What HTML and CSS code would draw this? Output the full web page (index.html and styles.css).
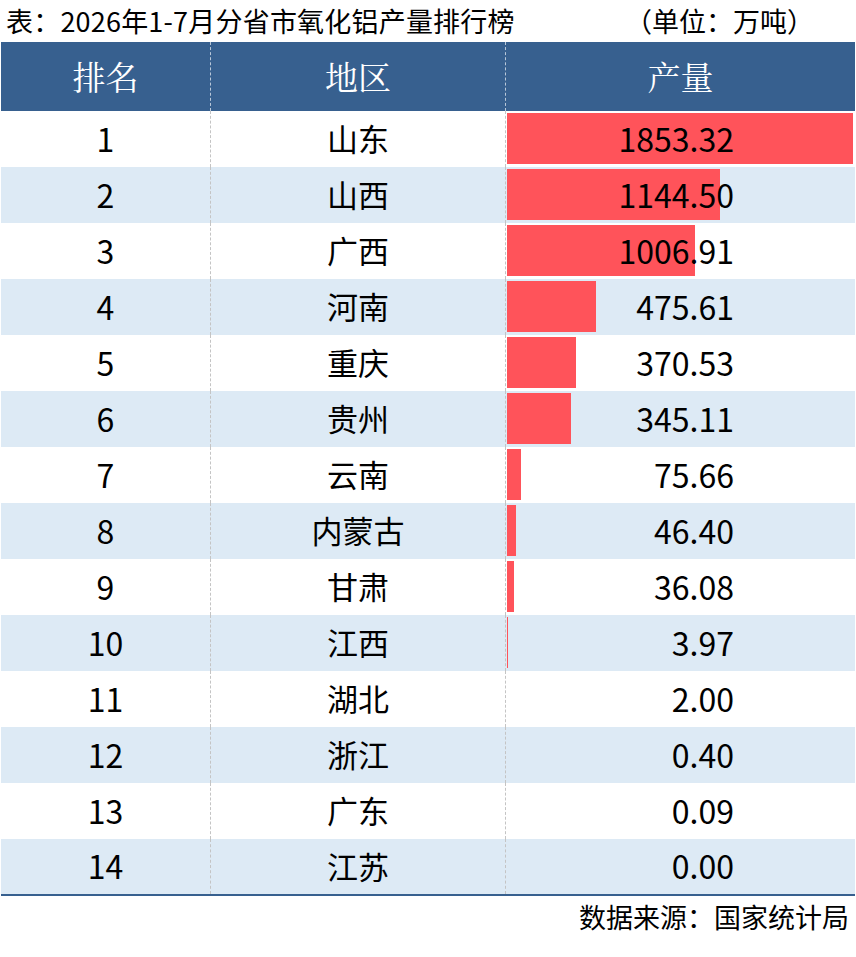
FILE: index.html
```html
<!DOCTYPE html>
<html lang="zh">
<head>
<meta charset="utf-8">
<link rel="stylesheet" href="styles.css">
</head>
<body>
<div class="page">
  <div class="title">
    <span class="title-main">表：2026年1-7月分省市氧化铝产量排行榜</span>
    <span class="unit">（单位：万吨）</span>
  </div>
  <div class="table">
    <div class="row head">
      <div class="cell c1">排名</div>
      <div class="cell c2">地区</div>
      <div class="cell c3">产量</div>
    </div>
    <div class="row"><div class="cell c1">1</div><div class="cell c2">山东</div><div class="cell c3"><div class="bar" style="width:346px"></div><span class="num">1853.32</span></div></div>
    <div class="row alt"><div class="cell c1">2</div><div class="cell c2">山西</div><div class="cell c3"><div class="bar" style="width:213px"></div><span class="num">1144.50</span></div></div>
    <div class="row"><div class="cell c1">3</div><div class="cell c2">广西</div><div class="cell c3"><div class="bar" style="width:188px"></div><span class="num">1006.91</span></div></div>
    <div class="row alt"><div class="cell c1">4</div><div class="cell c2">河南</div><div class="cell c3"><div class="bar" style="width:89px"></div><span class="num">475.61</span></div></div>
    <div class="row"><div class="cell c1">5</div><div class="cell c2">重庆</div><div class="cell c3"><div class="bar" style="width:69px"></div><span class="num">370.53</span></div></div>
    <div class="row alt"><div class="cell c1">6</div><div class="cell c2">贵州</div><div class="cell c3"><div class="bar" style="width:64px"></div><span class="num">345.11</span></div></div>
    <div class="row"><div class="cell c1">7</div><div class="cell c2">云南</div><div class="cell c3"><div class="bar" style="width:14px"></div><span class="num">75.66</span></div></div>
    <div class="row alt"><div class="cell c1">8</div><div class="cell c2">内蒙古</div><div class="cell c3"><div class="bar" style="width:9px"></div><span class="num">46.40</span></div></div>
    <div class="row"><div class="cell c1">9</div><div class="cell c2">甘肃</div><div class="cell c3"><div class="bar" style="width:7px"></div><span class="num">36.08</span></div></div>
    <div class="row alt"><div class="cell c1">10</div><div class="cell c2">江西</div><div class="cell c3"><div class="bar" style="width:1px"></div><span class="num">3.97</span></div></div>
    <div class="row"><div class="cell c1">11</div><div class="cell c2">湖北</div><div class="cell c3"><span class="num">2.00</span></div></div>
    <div class="row alt"><div class="cell c1">12</div><div class="cell c2">浙江</div><div class="cell c3"><span class="num">0.40</span></div></div>
    <div class="row"><div class="cell c1">13</div><div class="cell c2">广东</div><div class="cell c3"><span class="num">0.09</span></div></div>
    <div class="row alt last"><div class="cell c1">14</div><div class="cell c2">江苏</div><div class="cell c3"><span class="num">0.00</span></div></div>
  </div>
  <div class="source">数据来源：国家统计局</div>
</div>
</body>
</html>
```

FILE: styles.css
```css
* { box-sizing: border-box; }
html, body { margin: 0; padding: 0; background: #fff; }
body {
  font-family: "Noto Sans CJK SC", "Noto Sans", sans-serif;
  color: #000;
  width: 856px;
  height: 957px;
  overflow: hidden;
}
.page { width: 856px; }
.title {
  height: 42px;
  display: flex;
  justify-content: space-between;
  align-items: center;
  padding: 0 42px 0 6px;
  font-size: 27px;
  line-height: 42px;
}
.title-main { letter-spacing: 0.2px; }
.table {
  margin-left: 1px;
  width: 854px;
  border-bottom: 2px solid #37608f;
}
.row {
  display: grid;
  grid-template-columns: 210px 295px 349px;
  height: 56px;
  background: #fff;
}
.row.alt { background: #ddeaf5; }
.row.head {
  height: 69px;
  background: #37608f;
  color: #fff;
}
.row.last { height: 55px; }
.cell {
  display: flex;
  align-items: center;
  justify-content: center;
  font-size: 31px;
  position: relative;
  padding-bottom: 3px;
  border-right: 1px dashed #c4c4c4;
}
.cell.c1 { font-size: 32px; }
.cell.c3 { border-right: none; justify-content: flex-end; padding-right: 121px; font-size: 32px; }
.head .cell { font-size: 33px; padding-bottom: 2px; font-family: "Noto Serif CJK SC", "Noto Sans CJK SC", serif; border-right-color: #b9c8d9; }
.head .cell.c3 { justify-content: center; padding-right: 0; }
.bar {
  position: absolute;
  left: 1px;
  top: 2px;
  bottom: 3px;
  background: #ff535a;
}
.num { position: relative; }
.source {
  text-align: right;
  padding-right: 7px;
  font-size: 27px;
  line-height: 42px;
}
```
